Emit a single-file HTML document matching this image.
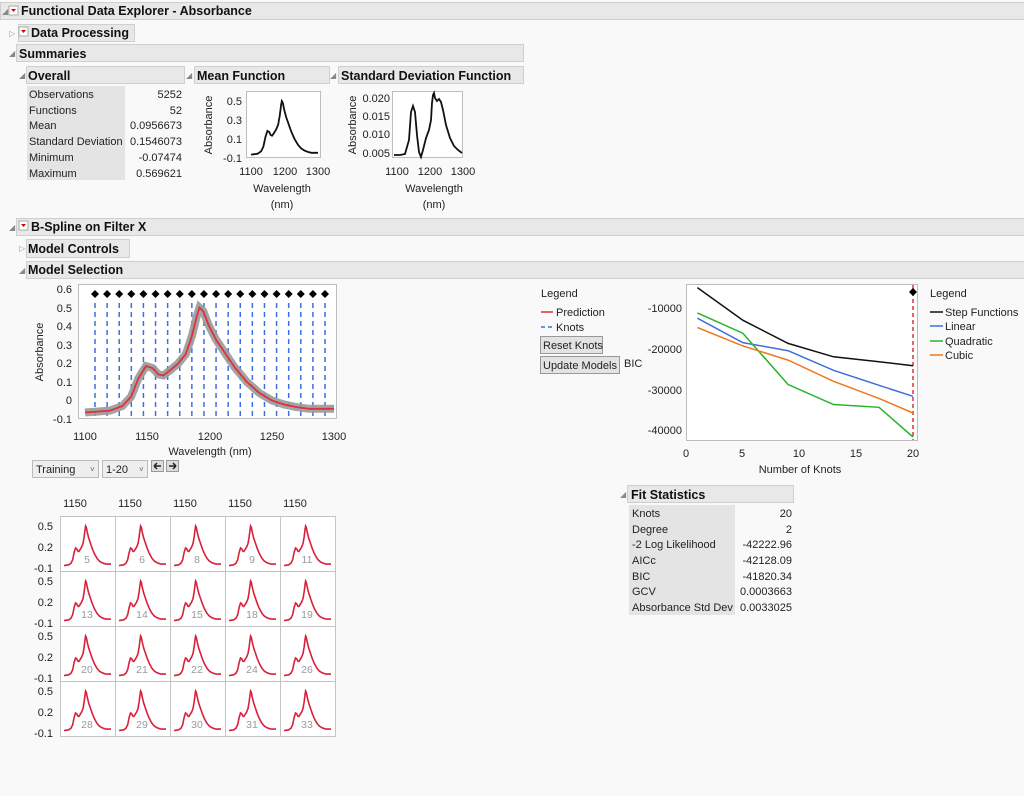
<!DOCTYPE html>
<html><head><meta charset="utf-8"><style>
html,body{margin:0;padding:0;background:#f9f9f9;width:1024px;height:796px;overflow:hidden}
svg{display:block;font-family:"Liberation Sans",sans-serif}
.h{font-weight:bold;font-size:12.5px;fill:#111}
.t{font-size:11px;fill:#222}
.bar{fill:#e8e8e8;stroke:#cfcfcf}
.w{fill:#fff;stroke:#bdbdbd}
.g{fill:#e4e4e4}
</style></head><body>
<svg id="s" width="1024" height="796" viewBox="0 0 1024 796">
<rect class="bar" x="0.5" y="2.5" width="1030" height="17"/>
<text x="2" y="14" font-size="8" fill="#888">◢</text>
<rect x="9" y="6" width="9" height="9" fill="#fff" stroke="#aaa"/><path d="M11 9h5l-2.5 3z" fill="#d00"/>
<text class="h" x="21" y="15">Functional Data Explorer - Absorbance</text>

<rect class="bar" x="18.5" y="24.5" width="116" height="17"/>
<text x="9" y="36" font-size="8" fill="#999">▷</text>
<rect x="19" y="27" width="9" height="9" fill="#fff" stroke="#aaa"/><path d="M21 30h5l-2.5 3z" fill="#d00"/>
<text class="h" x="31" y="37">Data Processing</text>

<rect class="bar" x="16.5" y="44.5" width="507" height="17"/>
<text x="9" y="56" font-size="8" fill="#888">◢</text>
<text class="h" x="19" y="58">Summaries</text>

<rect class="bar" x="26.5" y="66.5" width="158" height="17"/>
<text x="19" y="78" font-size="8" fill="#888">◢</text>
<text class="h" x="28" y="80">Overall</text>
<rect class="bar" x="194.5" y="66.5" width="135" height="17"/>
<text x="186" y="78" font-size="8" fill="#888">◢</text>
<text class="h" x="197" y="80">Mean Function</text>
<rect class="bar" x="338.5" y="66.5" width="185" height="17"/>
<text x="330" y="78" font-size="8" fill="#888">◢</text>
<text class="h" x="341" y="80">Standard Deviation Function</text>

<rect class="g" x="27" y="86" width="98" height="94"/>
<g class="t">
<text x="29" y="98">Observations</text><text x="182" y="98" text-anchor="end">5252</text>
<text x="29" y="114">Functions</text><text x="182" y="114" text-anchor="end">52</text>
<text x="29" y="129">Mean</text><text x="182" y="129" text-anchor="end">0.0956673</text>
<text x="29" y="145">Standard Deviation</text><text x="182" y="145" text-anchor="end">0.1546073</text>
<text x="29" y="161">Minimum</text><text x="182" y="161" text-anchor="end">-0.07474</text>
<text x="29" y="177">Maximum</text><text x="182" y="177" text-anchor="end">0.569621</text>
</g>

<rect class="w" x="246.5" y="91.5" width="74" height="66"/>
<g class="t" text-anchor="end">
<text x="242" y="105">0.5</text><text x="242" y="124">0.3</text><text x="242" y="143">0.1</text><text x="242" y="162">-0.1</text>
</g>
<text class="t" transform="translate(212,125) rotate(-90)" text-anchor="middle">Absorbance</text>
<g class="t" text-anchor="middle"><text x="251" y="175">1100</text><text x="285" y="175">1200</text><text x="318" y="175">1300</text>
<text x="282" y="192">Wavelength</text><text x="282" y="208">(nm)</text></g>
<path id="mean" fill="none" stroke="#111" stroke-width="1.8"/>

<rect class="w" x="392.5" y="91.5" width="70" height="66"/>
<g class="t" text-anchor="end">
<text x="390" y="102">0.020</text><text x="390" y="120">0.015</text><text x="390" y="138">0.010</text><text x="390" y="157">0.005</text>
</g>
<text class="t" transform="translate(356,125) rotate(-90)" text-anchor="middle">Absorbance</text>
<g class="t" text-anchor="middle"><text x="397" y="175">1100</text><text x="430" y="175">1200</text><text x="463" y="175">1300</text>
<text x="434" y="192">Wavelength</text><text x="434" y="208">(nm)</text></g>
<path fill="none" stroke="#111" stroke-width="1.8" d="M394 155 L400 155 L405 154 L409 140 L411 112 L413 106 L415 112 L417 135 L419 152 L421 157 L423 150 L426 138 L429 130 L431 120 L432 103 L433 95 L434 93 L435 98 L437 101 L439 99 L441 102 L443 110 L446 125 L450 138 L454 146 L458 150 L462 153"/>

<rect class="bar" x="16.5" y="218.5" width="1010" height="17"/>
<text x="9" y="230" font-size="8" fill="#888">◢</text>
<rect x="19" y="221" width="9" height="9" fill="#fff" stroke="#aaa"/><path d="M21 224h5l-2.5 3z" fill="#d00"/>
<text class="h" x="31" y="231">B-Spline on Filter X</text>
<rect class="bar" x="26.5" y="239.5" width="103" height="18"/>
<text x="19" y="251" font-size="8" fill="#999">▷</text>
<text class="h" x="28" y="253">Model Controls</text>
<rect class="bar" x="26.5" y="261.5" width="1000" height="17"/>
<text x="19" y="273" font-size="8" fill="#888">◢</text>
<text class="h" x="28" y="274">Model Selection</text>

<rect class="w" x="78.5" y="284.5" width="258" height="134"/>
<g class="t" text-anchor="end">
<text x="72" y="293">0.6</text><text x="72" y="312">0.5</text><text x="72" y="330">0.4</text><text x="72" y="349">0.3</text>
<text x="72" y="367">0.2</text><text x="72" y="386">0.1</text><text x="72" y="404">0</text><text x="72" y="423">-0.1</text>
</g>
<text class="t" transform="translate(43,352) rotate(-90)" text-anchor="middle">Absorbance</text>
<g class="t" text-anchor="middle"><text x="85" y="440">1100</text><text x="147" y="440">1150</text><text x="210" y="440">1200</text><text x="272" y="440">1250</text><text x="334" y="440">1300</text>
<text x="210" y="455">Wavelength (nm)</text></g>
<g id="knots"></g>
<path id="band" fill="none" stroke="#999" stroke-width="8" opacity="0.9"/>
<path id="pred" fill="none" stroke="#e0303a" stroke-width="1.8"/>

<rect x="32.5" y="460.5" width="66" height="17" fill="#eee" stroke="#bbb"/><text class="t" x="36" y="473">Training</text><text x="90" y="472" font-size="8" fill="#666">˅</text>
<rect x="102.5" y="460.5" width="45" height="17" fill="#eee" stroke="#bbb"/><text class="t" x="106" y="473">1-20</text><text x="139" y="472" font-size="8" fill="#666">˅</text>
<rect x="151.5" y="460.5" width="12" height="11" fill="#ddd" stroke="#999"/><path d="M154 466h7M154 466l3-3M154 466l3 3" stroke="#222" stroke-width="1.5"/>
<rect x="166.5" y="460.5" width="12" height="11" fill="#ddd" stroke="#999"/><path d="M169 466h7M176 466l-3-3M176 466l-3 3" stroke="#222" stroke-width="1.5"/>

<g class="t">
<text x="541" y="297">Legend</text>
<path d="M541 312h12" stroke="#e0303a" stroke-width="1.5"/><text x="556" y="316">Prediction</text>
<path d="M541 327h4M548 327h4" stroke="#3c6fe0" stroke-width="1.5"/><text x="556" y="331">Knots</text>
</g>
<rect x="540.5" y="336.5" width="62" height="17" fill="#e3e3e3" stroke="#999"/><text class="t" x="543" y="349">Reset Knots</text>
<rect x="540.5" y="356.5" width="79" height="17" fill="#e3e3e3" stroke="#999"/><text class="t" x="543" y="369">Update Models</text>
<text class="t" x="624" y="367">BIC</text>

<rect class="w" x="686.5" y="284.5" width="231" height="156"/>
<g class="t" text-anchor="end">
<text x="682" y="312">-10000</text><text x="682" y="353">-20000</text><text x="682" y="394">-30000</text><text x="682" y="434">-40000</text>
</g>
<g class="t" text-anchor="middle"><text x="686" y="457">0</text><text x="742" y="457">5</text><text x="799" y="457">10</text><text x="856" y="457">15</text><text x="913" y="457">20</text>
<text x="800" y="473">Number of Knots</text></g>
<path d="M913 285V440" stroke="#e0303a" stroke-width="1.5" stroke-dasharray="4,3"/>
<g id="bic" fill="none" stroke-width="1.5"></g>
<path d="M913 288l4 4-4 4-4-4z" fill="#000"/>
<g class="t">
<text x="930" y="297">Legend</text>
<path d="M930 312h13" stroke="#111" stroke-width="1.5"/><text x="945" y="316">Step Functions</text>
<path d="M930 326h13" stroke="#3c6fe0" stroke-width="1.5"/><text x="945" y="330">Linear</text>
<path d="M930 341h13" stroke="#2ab32a" stroke-width="1.5"/><text x="945" y="345">Quadratic</text>
<path d="M930 355h13" stroke="#ee7a20" stroke-width="1.5"/><text x="945" y="359">Cubic</text>
</g>

<g class="t" text-anchor="middle"><text x="75" y="507">1150</text><text x="130" y="507">1150</text><text x="185" y="507">1150</text><text x="240" y="507">1150</text><text x="295" y="507">1150</text></g>
<g id="grid"></g>

<rect class="bar" x="627.5" y="485.5" width="166" height="17"/>
<text x="620" y="497" font-size="8" fill="#888">◢</text>
<text class="h" x="631" y="499">Fit Statistics</text>
<rect class="g" x="629" y="505" width="106" height="110"/>
<g class="t">
<text x="632" y="517">Knots</text><text x="792" y="517" text-anchor="end">20</text>
<text x="632" y="533">Degree</text><text x="792" y="533" text-anchor="end">2</text>
<text x="632" y="548">-2 Log Likelihood</text><text x="792" y="548" text-anchor="end">-42222.96</text>
<text x="632" y="564">AICc</text><text x="792" y="564" text-anchor="end">-42128.09</text>
<text x="632" y="580">BIC</text><text x="792" y="580" text-anchor="end">-41820.34</text>
<text x="632" y="595">GCV</text><text x="792" y="595" text-anchor="end">0.0003663</text>
<text x="632" y="611">Absorbance Std Dev</text><text x="792" y="611" text-anchor="end">0.0033025</text>
</g>
</svg>
<script>
var P=[[1100,-0.065],[1120,-0.055],[1130,-0.03],[1137,0.02],[1143,0.12],[1149,0.185],[1154,0.175],[1159,0.14],[1163,0.135],[1168,0.16],[1175,0.2],[1181,0.25],[1186,0.35],[1190,0.46],[1192,0.5],[1195,0.48],[1199,0.41],[1205,0.33],[1212,0.26],[1220,0.18],[1230,0.1],[1240,0.04],[1250,0.0],[1260,-0.022],[1270,-0.036],[1280,-0.045],[1300,-0.045]];
function f(w){for(var i=0;i<P.length-1;i++){if(w<=P[i+1][0]){var t=(w-P[i][0])/(P[i+1][0]-P[i][0]);var s=t*t*(3-2*t);var u=0.5*t+0.5*s;return P[i][1]+(P[i+1][1]-P[i][1])*t;}}return P[P.length-1][1];}
function path(x0,x1,y0,ys){var d="";for(var w=1100;w<=1300;w+=1){var x=x0+(w-1100)/200*(x1-x0);var y=y0-(f(w)+0.1)*ys;d+=(d?"L":"M")+x.toFixed(1)+" "+y.toFixed(1);}return d;}
var NS="http://www.w3.org/2000/svg";
function el(p,t,a){var e=document.createElementNS(NS,t);for(var k in a)e.setAttribute(k,a[k]);p.appendChild(e);return e;}
document.getElementById("mean").setAttribute("d",path(251,318,158,95));
var pd=path(85,334,419,185.7);
document.getElementById("band").setAttribute("d",pd);
document.getElementById("pred").setAttribute("d",pd);
var kg=document.getElementById("knots");
for(var i=0;i<20;i++){var x=95+i*(325-95)/19;el(kg,"path",{d:"M"+x+" 303V416",stroke:"#3c6fe0","stroke-width":1.5,"stroke-dasharray":"5,4"});el(kg,"path",{d:"M"+x+" 290l4 4-4 4-4-4z",fill:"#000"});}
var data=[["#111",[[1,-5000],[5,-13000],[9,-18700],[13,-22000],[17,-23200],[20,-24200]]],
["#3c6fe0",[[1,-12500],[5,-18500],[9,-20500],[13,-25300],[17,-29000],[20,-31700]]],
["#2ab32a",[[1,-11200],[5,-16200],[9,-28800],[13,-33700],[17,-34400],[20,-41700]]],
["#ee7a20",[[1,-14800],[5,-19300],[9,-22800],[13,-28000],[17,-32200],[20,-35800]]]];
var bg=document.getElementById("bic");
data.forEach(function(s){var d="";s[1].forEach(function(p){var x=686+p[0]*11.35,y=308+(-p[1]-10000)/1000*4.07;d+=(d?"L":"M")+x.toFixed(1)+" "+y.toFixed(1);});el(bg,"path",{d:d,stroke:s[0]});});
var gg=document.getElementById("grid");
var nums=[[5,6,8,9,11],[13,14,15,18,19],[20,21,22,24,26],[28,29,30,31,33]];
for(var r=0;r<4;r++){var ty=516+r*55;
el(gg,"text",{x:53,y:ty+14,"text-anchor":"end","class":"t"}).textContent="0.5";
el(gg,"text",{x:53,y:ty+35,"text-anchor":"end","class":"t"}).textContent="0.2";
el(gg,"text",{x:53,y:ty+56,"text-anchor":"end","class":"t"}).textContent="-0.1";
for(var c=0;c<5;c++){var tx=60+c*55;
el(gg,"rect",{x:tx+0.5,y:ty+0.5,width:55,height:55,fill:"#fff",stroke:"#c4c4c4"});
el(gg,"path",{d:path(tx+4,tx+51,ty+52,70),fill:"none",stroke:"#d8203a","stroke-width":1.6});
el(gg,"text",{x:tx+27,y:ty+47,"text-anchor":"middle","font-size":"10.5",fill:"#999"}).textContent=nums[r][c];}}
</script>
</body></html>
